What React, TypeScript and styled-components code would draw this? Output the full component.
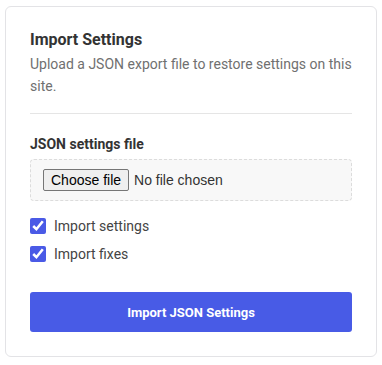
import React, { useState } from "react";
import styled, { createGlobalStyle } from "styled-components";

const Global = createGlobalStyle`
  html, body { margin: 0; padding: 0; background: #fff; }
  body { font-family: Roboto, "Liberation Sans", sans-serif; }
`;

const Page = styled.div`
  padding: 6px 5px;
`;

const Card = styled.section`
  border: 1px solid #e3e3e6;
  border-radius: 6px;
  background: #fff;
  padding: 22px 24px 24px 24px;
  display: flex;
  flex-direction: column;
`;

const Title = styled.h2`
  margin: 0;
  font-size: 16px;
  font-weight: 700;
  color: #333;
  line-height: 22px;
`;

const Desc = styled.p`
  margin: 2px 0 0;
  font-size: 14px;
  line-height: 22px;
  color: #707070;
`;

const Divider = styled.hr`
  border: 0;
  border-top: 1px solid #e5e5e5;
  margin: 16px 0 20px;
`;

const Label = styled.div`
  font-size: 14px;
  font-weight: 700;
  color: #333;
  line-height: 20px;
`;

const FileBox = styled.label`
  margin-top: 5px;
  border: 1px dashed #dcdcdc;
  border-radius: 4px;
  background: #f8f8f8;
  padding: 9px 12px;
  display: flex;
  align-items: center;
  gap: 5px;
  font-family: "Liberation Sans", Arial, sans-serif;
  font-size: 14px;
  cursor: pointer;
`;

const HiddenInput = styled.input`
  display: none;
`;

const ChooseButton = styled.span`
  display: inline-flex;
  align-items: center;
  height: 22px;
  box-sizing: border-box;
  padding: 0 7px;
  border: 1px solid #767676;
  border-radius: 2px;
  background: #efefef;
  color: #000;
`;

const FileName = styled.span`
  color: #333;
`;

const Checks = styled.div`
  margin-top: 15px;
  display: flex;
  flex-direction: column;
  gap: 8px;
`;

const CheckRow = styled.label`
  display: flex;
  align-items: center;
  gap: 8px;
  font-size: 14px;
  color: #444;
  line-height: 20px;
`;

const Check = styled.input`
  margin: 0;
  width: 16px;
  height: 16px;
  accent-color: #4a5ae6;
`;

const Submit = styled.button`
  margin-top: 28px;
  height: 40px;
  border: 0;
  border-radius: 3px;
  background: #485be6;
  color: #fff;
  font-family: Roboto, "Liberation Sans", sans-serif;
  font-size: 13px;
  font-weight: 700;
  cursor: pointer;
`;

export default function App() {
  const [fileName, setFileName] = useState<string | null>(null);
  return (
    <Page>
      <Global />
      <Card>
        <Title>Import Settings</Title>
        <Desc>Upload a JSON export file to restore settings on this site.</Desc>
        <Divider />
        <Label>JSON settings file</Label>
        <FileBox>
          <HiddenInput
            type="file"
            accept="application/json"
            onChange={(e) => setFileName(e.target.files?.[0]?.name ?? null)}
          />
          <ChooseButton>Choose file</ChooseButton>
          <FileName>{fileName ?? "No file chosen"}</FileName>
        </FileBox>
        <Checks>
          <CheckRow>
            <Check type="checkbox" defaultChecked />
            Import settings
          </CheckRow>
          <CheckRow>
            <Check type="checkbox" defaultChecked />
            Import fixes
          </CheckRow>
        </Checks>
        <Submit>Import JSON Settings</Submit>
      </Card>
    </Page>
  );
}
